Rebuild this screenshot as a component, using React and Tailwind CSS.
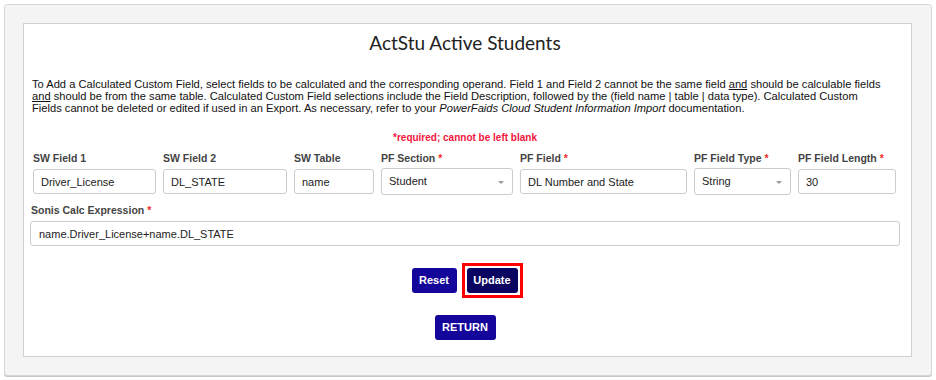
import { useState } from "react";

const FIELDS = [
  { key: "f1", label: "SW Field 1", width: "w-[123px]", value: "Driver_License" },
  { key: "f2", label: "SW Field 2", width: "w-[124px]", value: "DL_STATE" },
  { key: "tbl", label: "SW Table", width: "w-[80px]", value: "name" },
  { key: "sec", label: "PF Section", width: "w-[132px]", value: "Student", required: true, select: true },
  { key: "fld", label: "PF Field", width: "w-[167px]", value: "DL Number and State", required: true },
  { key: "type", label: "PF Field Type", width: "w-[97px]", value: "String", required: true, select: true },
  { key: "len", label: "PF Field Length", width: "w-[98px]", value: "30", required: true },
];

function Label({ text, required }) {
  return (
    <div className="h-[14px] text-[10.5px] leading-[14px] font-bold text-[#444] whitespace-nowrap">
      {text}
      {required && <span className="text-[#ee2a1f]"> *</span>}
    </div>
  );
}

function Field({ f, value, onChange }) {
  return (
    <div className={`${f.width} flex flex-col gap-[4px]`}>
      <Label text={f.label} required={f.required} />
      {f.select ? (
        <div className="relative h-[27px] -mt-[1px] border border-[#ccc] rounded-[3px] bg-white flex items-center pl-[7px] text-[11px] text-[#222]">
          <span>{value}</span>
          <span className="absolute right-[8px] top-[12px] w-0 h-0 border-l-[3px] border-r-[3px] border-t-[3px] border-l-transparent border-r-transparent border-t-[#999]" />
        </div>
      ) : (
        <input
          value={value}
          onChange={(e) => onChange(e.target.value)}
          className="h-[25px] border border-[#ccc] rounded-[3px] bg-white px-[7px] text-[11px] text-[#222] outline-none"
        />
      )}
    </div>
  );
}

export default function App() {
  const [values, setValues] = useState(() =>
    Object.fromEntries(FIELDS.map((f) => [f.key, f.value]))
  );
  const [expr, setExpr] = useState("name.Driver_License+name.DL_STATE");

  return (
    <div className="bg-white p-[4px] font-['Liberation_Sans',Arial,sans-serif]">
      <div className="h-[372px] rounded-[3px] border border-[#d6d6d6] bg-[#f4f4f4] pt-[18px] pl-[18px] pr-[19px] shadow-[0_1px_0_#c8c8c8]">
        <div className="h-[334px] border border-[#d0d0d0] bg-white pl-[6px] pr-[11px] flex flex-col">
          {/* TITLE */}
          <h1 className="mt-[7px] text-center text-[19px] leading-[24px] text-[#222] font-['Lato',sans-serif]">
            ActStu Active Students
          </h1>

          {/* INFO */}
          <p className="mt-[23px] ml-[2px] w-[856px] text-[11.15px] leading-[12px] text-[#111]">
            To Add a Calculated Custom Field, select fields to be calculated and the corresponding operand. Field 1 and Field 2 cannot be the same field <u>and</u> should be calculable fields <u>and</u> should be from the same table. Calculated Custom Field selections include the Field Description, followed by the (field name | table | data type). Calculated Custom Fields cannot be deleted or edited if used in an Export. As necessary, refer to your <i>PowerFaids Cloud Student Information Import</i> documentation.
          </p>

          <div className="mt-[18px] text-center text-[10px] leading-[12px] font-bold text-[#f2143c]">
            *required; cannot be left blank
          </div>

          {/* FIELDS */}
          <div className="mt-[7px] ml-[3px] flex gap-[7px]">
            {FIELDS.map((f) => (
              <Field
                key={f.key}
                f={f}
                value={values[f.key]}
                onChange={(v) => setValues((prev) => ({ ...prev, [f.key]: v }))}
              />
            ))}
          </div>

          <div className="mt-[8px] flex flex-col gap-[4px]">
            <div className="ml-[1px]">
              <Label text="Sonis Calc Expression" required />
            </div>
            <input
              value={expr}
              onChange={(e) => setExpr(e.target.value)}
              className="h-[25px] w-full border border-[#ccc] rounded-[3px] bg-white px-[8px] text-[11px] text-[#222] outline-none"
            />
          </div>

          {/* BUTTONS */}
          <div className="mt-[22px] pl-[4px] flex justify-center items-center">
            <button className="h-[25px] w-[45px] rounded-[3px] bg-[#14069a] text-white text-[11px] font-bold">
              Reset
            </button>
            <div className="ml-[5px] -my-[5px] border-[3px] border-[#f00] p-[2px]">
              <button className="block h-[25px] w-[51px] rounded-[3px] bg-[#0b0562] text-white text-[11px] font-bold">
                Update
              </button>
            </div>
          </div>

          <div className="mt-[22px] flex justify-center">
            <button className="h-[25px] w-[61px] rounded-[3px] bg-[#14069a] text-white text-[11px] font-bold">
              RETURN
            </button>
          </div>
        </div>
      </div>
    </div>
  );
}
